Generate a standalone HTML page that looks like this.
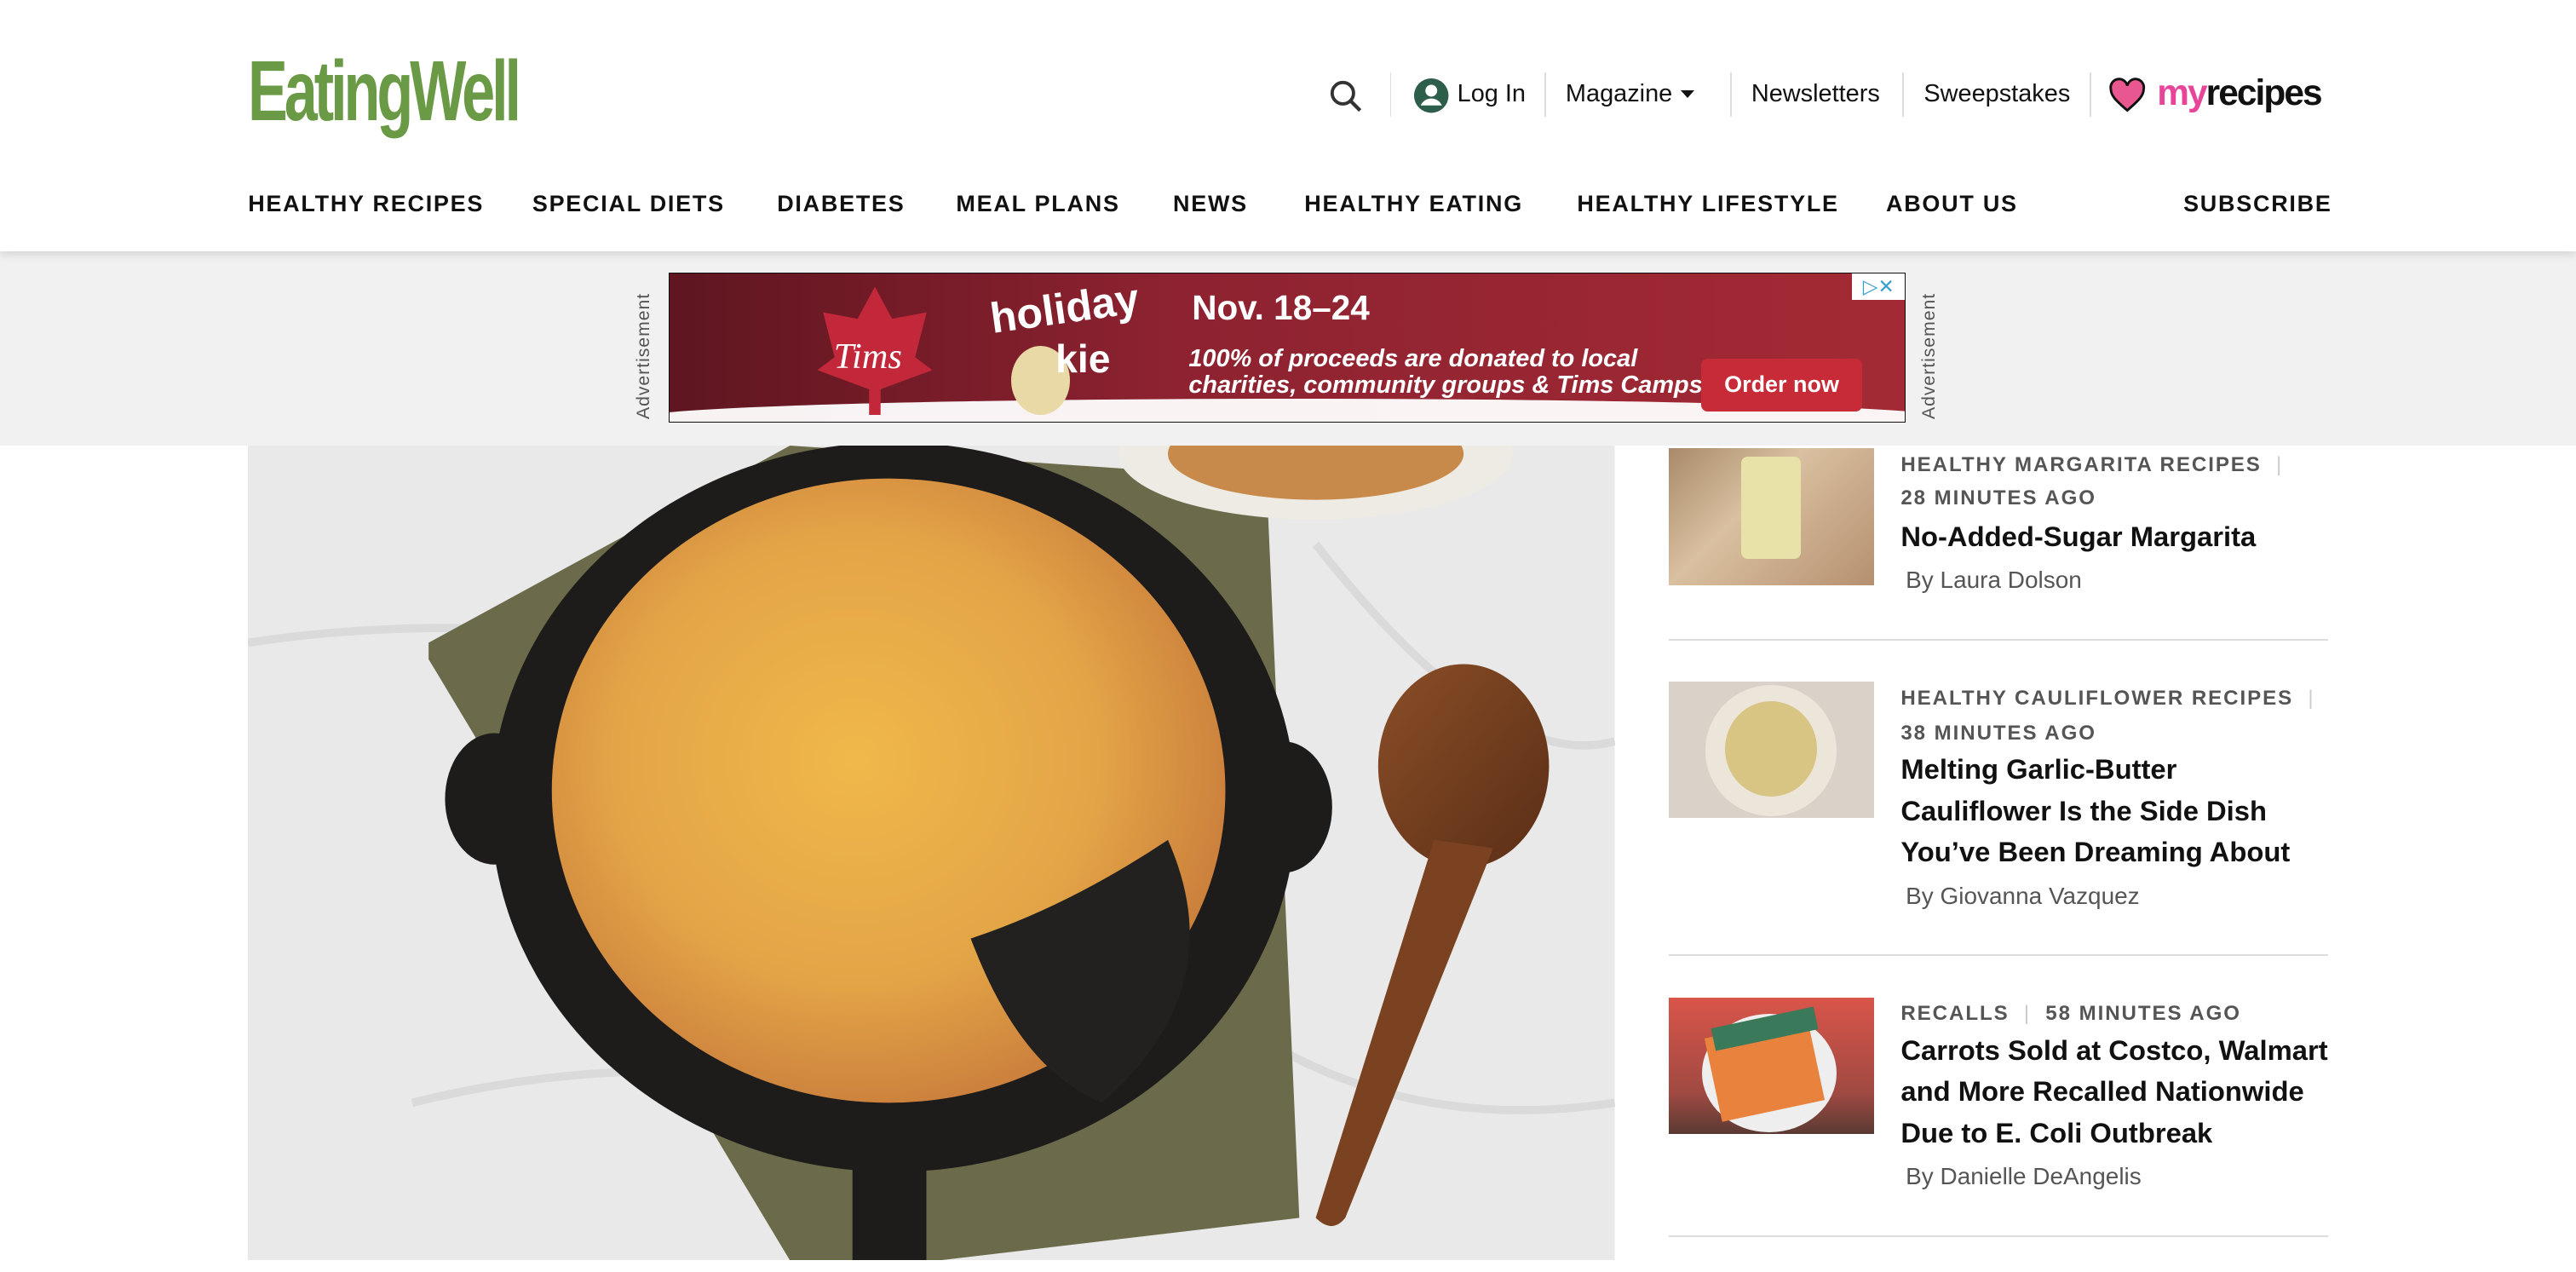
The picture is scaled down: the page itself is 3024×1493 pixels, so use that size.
<!DOCTYPE html>
<html><head><meta charset="utf-8"><style>
html,body{margin:0;padding:0;background:#fff;overflow:hidden}
body{width:1568px;height:774px;zoom:1.92857;position:relative;font-family:"Liberation Sans",Arial,sans-serif;color:#111}
.abs{position:absolute}
.logo{left:151px;top:26px;font-size:52px;color:#6a9a45;font-weight:bold;letter-spacing:-3px;transform:scaleX(0.7);transform-origin:left top;white-space:nowrap}
.top{top:49px;font-size:15px;color:#111;white-space:nowrap}
.div{top:44px;width:1px;height:27px;background:#ddd}
.nav{top:116px;font-size:14px;font-weight:bold;letter-spacing:0.9px;color:#111;white-space:nowrap}
.hdr{left:0;top:0;width:1568px;height:153px;background:#fff;box-shadow:0 2px 5px rgba(0,0,0,.12);z-index:2}
.band{left:0;top:153px;width:1568px;height:118px;background:#f1f1f1}
.kick{font-size:12.5px;letter-spacing:1.0px;color:#555;font-weight:bold;white-space:nowrap}
.ttl{font-size:17px;font-weight:bold;line-height:25px;color:#111}
.by{font-size:14.5px;color:#555}
.thumb{left:1016px;width:125px;height:83px}
.hr{left:1016px;width:401px;height:1px;background:#ddd}
</style></head><body>
<div class="abs hdr">
<div class="abs logo">EatingWell</div>
<svg class="abs" style="left:809px;top:48px" width="22" height="22" viewBox="0 0 22 22"><circle cx="8.5" cy="8.5" r="6.5" fill="none" stroke="#333" stroke-width="2"/><line x1="13.5" y1="13.5" x2="19" y2="19" stroke="#333" stroke-width="2.2"/></svg>
<div class="abs div" style="left:846px"></div>
<svg class="abs" style="left:860px;top:47px" width="22" height="22" viewBox="0 0 22 22"><circle cx="11" cy="11" r="10.5" fill="#2c5e4a"/><circle cx="11" cy="8" r="3.6" fill="#fff"/><path d="M4.5 17c1.5-3 4-4.2 6.5-4.2s5 1.2 6.5 4.2" fill="#fff"/></svg>
<div class="abs top" style="left:887px">Log In</div>
<div class="abs div" style="left:940px"></div>
<div class="abs top" style="left:953px">Magazine</div>
<div class="abs" style="left:1023px;top:55px;border:4.5px solid transparent;border-top:5px solid #111"></div>
<div class="abs div" style="left:1053px"></div>
<div class="abs top" style="left:1066px">Newsletters</div>
<div class="abs div" style="left:1158px"></div>
<div class="abs top" style="left:1171px">Sweepstakes</div>
<div class="abs div" style="left:1272px"></div>
<svg class="abs" style="left:1284px;top:47px" width="22" height="22" viewBox="0 0 22 22"><path d="M11 20C4 14 1 11 1 7A5 5 0 0 1 11 5A5 5 0 0 1 21 7C21 11 18 14 11 20Z" fill="#e8578f" stroke="#111" stroke-width="1.5"/></svg>
<div class="abs" style="left:1313px;top:44px;font-size:22px;font-weight:bold;letter-spacing:-1px;white-space:nowrap"><span style="color:#e8449a">my</span>recipes</div>
<div class="abs nav" style="left:151px">HEALTHY RECIPES</div>
<div class="abs nav" style="left:324px">SPECIAL DIETS</div>
<div class="abs nav" style="left:473px">DIABETES</div>
<div class="abs nav" style="left:582px">MEAL PLANS</div>
<div class="abs nav" style="left:714px">NEWS</div>
<div class="abs nav" style="left:794px">HEALTHY EATING</div>
<div class="abs nav" style="left:960px">HEALTHY LIFESTYLE</div>
<div class="abs nav" style="left:1148px">ABOUT US</div>
<div class="abs nav" style="left:1329px">SUBSCRIBE</div>
</div>
<div class="abs band"></div>
<div class="abs" style="left:386px;top:255px;transform:rotate(-90deg);transform-origin:left top;font-size:11px;color:#555;letter-spacing:.5px">Advertisement</div>
<div class="abs" style="left:1168px;top:255px;transform:rotate(-90deg);transform-origin:left top;font-size:11px;color:#555;letter-spacing:.5px">Advertisement</div>
<div class="abs" style="left:407px;top:166px;width:752px;height:90px;border:1px solid #111;background:linear-gradient(90deg,#5e1620,#8d2230 40%,#a32a35);overflow:hidden">
<div class="abs" style="left:-20px;top:76px;width:800px;height:40px;background:#fff;border-radius:50% 50% 0 0/30% 30% 0 0;opacity:.95"></div>
<div class="abs" style="left:90px;top:8px;width:70px;height:78px;background:#c3283a;clip-path:polygon(50% 0,65% 25%,95% 20%,85% 55%,100% 65%,55% 80%,55% 100%,45% 100%,45% 80%,0 65%,15% 55%,5% 20%,35% 25%)"></div>
<div class="abs" style="left:100px;top:38px;color:#fff;font-size:22px;font-style:italic;font-family:'Liberation Serif',serif">Tims</div>
<div class="abs" style="left:195px;top:6px;color:#fff;font-size:26px;font-weight:bold;transform:rotate(-8deg)">holiday</div>
<div class="abs" style="left:208px;top:44px;width:36px;height:42px;border-radius:50%;background:#e9d9a6"></div>
<div class="abs" style="left:235px;top:38px;color:#fff;font-size:24px;font-weight:bold">kie</div>
<div class="abs" style="left:318px;top:9px;color:#fff;font-size:21px;font-weight:bold">Nov. 18–24</div>
<div class="abs" style="left:316px;top:44px;color:#fff;font-size:15px;font-style:italic;font-weight:bold;line-height:16px">100% of proceeds are donated to local<br>charities, community groups &amp; Tims Camps.</div>
<div class="abs" style="left:628px;top:52px;width:98px;height:32px;background:#c72b38;border-radius:4px;color:#fff;font-weight:bold;font-size:14px;line-height:32px;text-align:center">Order now</div>
<div class="abs" style="left:720px;top:0;width:32px;height:16px;background:#fff;color:#3aa0d0;font-size:12px;line-height:16px;text-align:center">▷✕</div>
</div>
<svg class="abs" style="left:151px;top:271px" width="832" height="496" viewBox="0 0 832 496">
<defs><radialGradient id="ch" cx="45%" cy="45%" r="60%"><stop offset="0" stop-color="#f0b84a"/><stop offset=".6" stop-color="#e3a447"/><stop offset="1" stop-color="#c77a3a"/></radialGradient>
<linearGradient id="sp" x1="0" y1="0" x2="1" y2="1"><stop offset="0" stop-color="#8a4e27"/><stop offset="1" stop-color="#5a2e16"/></linearGradient></defs>
<rect width="832" height="496" fill="#e9e9e9"/>
<path d="M0 120 Q200 90 400 160 M100 400 Q300 350 500 430 M650 60 Q760 200 832 180 M600 350 Q700 420 832 400" stroke="#dadada" stroke-width="5" fill="none"/>
<polygon points="110,120 330,0 620,20 640,470 420,496 330,496 110,130" fill="#6b6a4a"/>
<ellipse cx="650" cy="5" rx="120" ry="40" fill="#eeeae4"/><ellipse cx="650" cy="5" rx="90" ry="28" fill="#c88a4a"/>
<rect x="368" y="400" width="45" height="96" fill="#1d1c1b"/>
<ellipse cx="393" cy="220" rx="245" ry="222" fill="#1d1c1b"/>
<ellipse cx="150" cy="215" rx="30" ry="40" fill="#1d1c1b"/><ellipse cx="630" cy="220" rx="30" ry="40" fill="#1d1c1b"/>
<ellipse cx="390" cy="210" rx="205" ry="190" fill="url(#ch)"/>
<path d="M560 240 Q600 330 520 400 Q470 380 440 300 Q500 280 560 240Z" fill="#23211f"/>
<ellipse cx="740" cy="195" rx="52" ry="62" fill="url(#sp)"/>
<path d="M722 240 L758 245 L668 470 Q660 480 650 470 Z" fill="#7a4220"/>
</svg>
<div class="abs thumb" style="top:273px;background:linear-gradient(135deg,#a88a6a,#d9c0a0 40%,#b59070)"><div class="abs" style="left:44px;top:5px;width:36px;height:62px;background:#e8e2a8;border-radius:4px"></div></div>
<div class="abs kick" style="left:1157px;top:276px">HEALTHY MARGARITA RECIPES <span style="color:#ccc;font-weight:normal">&nbsp;|</span></div>
<div class="abs kick" style="left:1157px;top:296px">28 MINUTES AGO</div>
<div class="abs ttl" style="left:1157px;top:314px">No-Added-Sugar Margarita</div>
<div class="abs by" style="left:1160px;top:345px">By Laura Dolson</div>
<div class="abs hr" style="top:389px"></div>
<div class="abs thumb" style="top:415px;background:#d8d2c8"><div class="abs" style="left:22px;top:2px;width:80px;height:80px;border-radius:50%;background:#ece6da"></div><div class="abs" style="left:34px;top:12px;width:56px;height:58px;border-radius:50%;background:#d8c583"></div></div>
<div class="abs kick" style="left:1157px;top:418px">HEALTHY CAULIFLOWER RECIPES <span style="color:#ccc;font-weight:normal">&nbsp;|</span></div>
<div class="abs kick" style="left:1157px;top:439px">38 MINUTES AGO</div>
<div class="abs ttl" style="left:1157px;top:456px">Melting Garlic-Butter<br>Cauliflower Is the Side Dish<br>You’ve Been Dreaming About</div>
<div class="abs by" style="left:1160px;top:537px">By Giovanna Vazquez</div>
<div class="abs hr" style="top:581px"></div>
<div class="abs thumb" style="top:607px;background:linear-gradient(180deg,#d9554a,#a04a42 70%,#5a3a34)"><div class="abs" style="left:20px;top:10px;width:82px;height:72px;border-radius:50%;background:#eee"></div><div class="abs" style="left:26px;top:18px;width:64px;height:52px;background:#e9823c;transform:rotate(-12deg)"></div><div class="abs" style="left:26px;top:12px;width:64px;height:14px;background:#3a7a5a;transform:rotate(-12deg)"></div></div>
<div class="abs kick" style="left:1157px;top:610px">RECALLS <span style="color:#ccc;font-weight:normal">&nbsp;|&nbsp;</span> 58 MINUTES AGO</div>
<div class="abs ttl" style="left:1157px;top:627px">Carrots Sold at Costco, Walmart<br>and More Recalled Nationwide<br>Due to E. Coli Outbreak</div>
<div class="abs by" style="left:1160px;top:708px">By Danielle DeAngelis</div>
<div class="abs hr" style="top:752px"></div>
</body></html>
